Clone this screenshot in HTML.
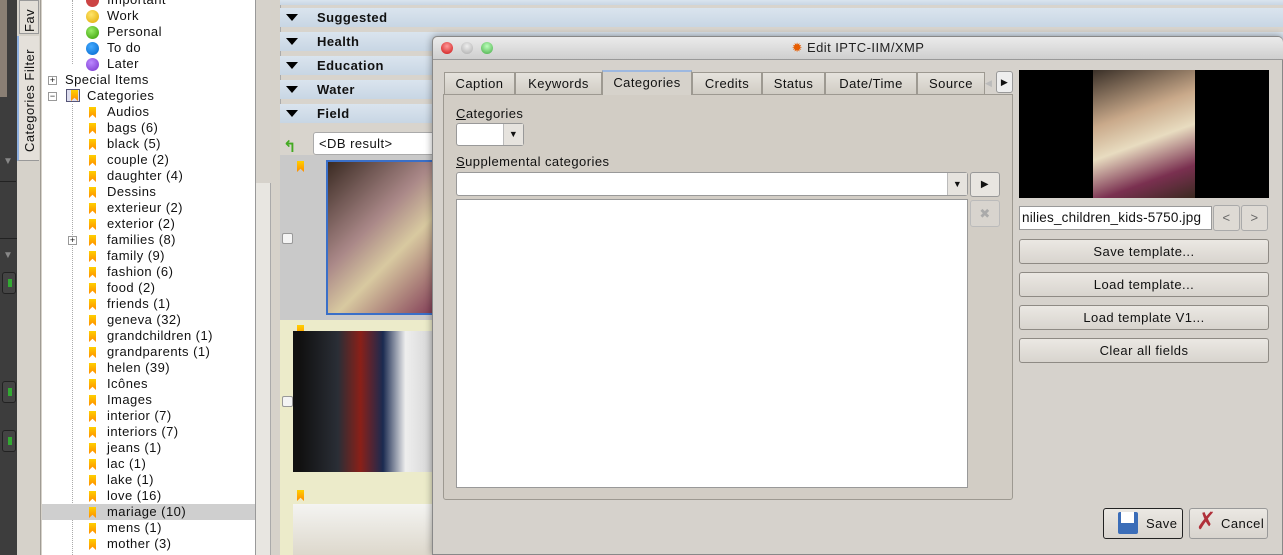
<!DOCTYPE html>
<html><head><meta charset="utf-8"><style>
*{box-sizing:border-box;margin:0;padding:0}
body{width:1283px;height:555px;overflow:hidden;position:relative;font-family:"Liberation Sans","DejaVu Sans",sans-serif;font-size:13px;letter-spacing:.45px;color:#111;background:#d6d2ca}
.a{position:absolute}
.row{position:absolute;left:0;height:16px;line-height:16px;white-space:nowrap}
.bm{position:absolute;width:7px;height:11px;background:linear-gradient(#ffd000,#ff8c00);top:3px;clip-path:polygon(0 0,100% 0,100% 100%,50% 70%,0 100%)}
.dot{position:absolute;width:13px;height:13px;border-radius:50%;top:2px}
.hdr{position:absolute;left:280px;width:1003px;height:19px;background:linear-gradient(#dae4ee,#c8d6e4);font-weight:bold;font-size:13px;line-height:19px;padding-left:37px}
.tri{position:absolute;left:6px;top:6px;width:0;height:0;border-left:6px solid transparent;border-right:6px solid transparent;border-top:7px solid #000}
.tab{position:absolute;top:72px;height:22px;border:1px solid #9d9991;border-bottom:none;background:linear-gradient(#e6e3dd,#d0ccc4);font-size:13px;line-height:21px;text-align:center}
.btn{position:absolute;left:1019px;width:250px;height:25px;border:1px solid #8e8a84;border-radius:3px;background:linear-gradient(#ebe8e3,#d8d4ce);text-align:center;line-height:23px;font-size:13px}
</style></head><body>
<div class="a" style="left:0;top:0;width:17px;height:555px;background:#3d3d3d"></div>
<div class="a" style="left:0;top:0;width:7px;height:97px;background:#8a7f74"></div>
<div class="a" style="left:0;top:160px;width:16px;height:22px;border-bottom:1px solid #222"></div>
<div class="a" style="left:3px;top:156px;color:#888;font-size:10px">▼</div>
<div class="a" style="left:3px;top:250px;color:#888;font-size:10px">▼</div>
<div class="a" style="left:0;top:238px;width:17px;height:1px;background:#222"></div>
<div class="a" style="left:2px;top:272px;width:14px;height:22px;border:1px solid #222;border-radius:3px;background:#444"></div>
<div class="a" style="left:8px;top:279px;width:4px;height:8px;background:#3a3"></div>
<div class="a" style="left:2px;top:381px;width:14px;height:22px;border:1px solid #222;border-radius:3px;background:#444"></div>
<div class="a" style="left:8px;top:388px;width:4px;height:8px;background:#3a3"></div>
<div class="a" style="left:2px;top:430px;width:14px;height:22px;border:1px solid #222;border-radius:3px;background:#444"></div>
<div class="a" style="left:8px;top:437px;width:4px;height:8px;background:#3a3"></div>
<div class="a" style="left:17px;top:0;width:24px;height:555px;background:#d6d2ca;border-right:1px solid #a09c94"></div>
<div class="a" style="left:19px;top:0;width:20px;height:34px;background:#e2ded7;border:1px solid #999"></div>
<div class="a" style="left:22px;top:32px;transform:rotate(-90deg);transform-origin:left top;font-size:13px;white-space:nowrap">Fav</div>
<div class="a" style="left:17px;top:36px;width:22px;height:125px;background:#e4e0da;border-left:2px solid #8fb0e0;border-bottom:1px solid #999"></div>
<div class="a" style="left:22px;top:152px;transform:rotate(-90deg);transform-origin:left top;font-size:13px;white-space:nowrap">Categories Filter</div>
<div class="a" style="left:42px;top:0;width:214px;height:555px;background:#fff;border-right:1px solid #999">
<div class="a" style="left:30px;top:0;height:64px;border-left:1px dotted #aaa"></div>
<div class="a" style="left:30px;top:104px;height:451px;border-left:1px dotted #aaa"></div>
<div class="row" style="top:-8px;left:44px;width:170px"><span class="dot" style="left:0;background:#c44"></span><span style="margin-left:21px">Important</span></div>
<div class="row" style="top:8px;left:44px"><span class="dot" style="left:0;background:radial-gradient(circle at 40% 35%,#ffe56a,#e0a800)"></span><span style="margin-left:21px">Work</span></div>
<div class="row" style="top:24px;left:44px"><span class="dot" style="left:0;background:radial-gradient(circle at 40% 35%,#9e6,#390)"></span><span style="margin-left:21px">Personal</span></div>
<div class="row" style="top:40px;left:44px"><span class="dot" style="left:0;background:radial-gradient(circle at 40% 35%,#4af,#06c)"></span><span style="margin-left:21px">To do</span></div>
<div class="row" style="top:56px;left:44px"><span class="dot" style="left:0;background:radial-gradient(circle at 40% 35%,#b8f,#73c)"></span><span style="margin-left:21px">Later</span></div>
<div class="a" style="left:6px;top:76px;width:9px;height:9px;border:1px solid #999;font-size:9px;line-height:7px;text-align:center;background:#fff;letter-spacing:0">+</div>
<div class="row" style="top:72px;left:23px">Special Items</div>
<div class="a" style="left:6px;top:92px;width:9px;height:9px;border:1px solid #999;font-size:9px;line-height:6px;text-align:center;background:#fff;letter-spacing:0">−</div>
<div class="a" style="left:24px;top:89px;width:14px;height:13px;border:1px solid #557;background:#dde"></div><span class="bm" style="left:29px;top:90px"></span>
<div class="row" style="top:88px;left:45px">Categories</div>
<div class="a" style="left:26px;top:236px;width:9px;height:9px;border:1px solid #999;font-size:9px;line-height:7px;text-align:center;background:#fff;letter-spacing:0">+</div>
<div class="a" style="left:0;top:504px;width:213px;height:16px;background:#cfcfcf"></div>
<div id="cats"></div>
</div>
<div class="a" style="left:256px;top:0;width:15px;height:555px;background:#e8e6e1;border-right:1px solid #aaa"></div>
<div class="a" style="left:256px;top:0;width:15px;height:183px;background:#d6d2cb"></div>
<div class="a" style="left:272px;top:0;width:8px;height:555px;background:#d6d2ca"></div>
<div class="a" style="left:280px;top:0;width:1003px;height:123px;background:#d8d4cd;border-left:1px solid #aaa"></div>
<div class="hdr" style="top:0;height:5px;padding:0"></div>
<div class="hdr" style="top:8px"><span class="tri"></span>Suggested</div>
<div class="hdr" style="top:32px"><span class="tri"></span>Health</div>
<div class="hdr" style="top:56px"><span class="tri"></span>Education</div>
<div class="hdr" style="top:80px"><span class="tri"></span>Water</div>
<div class="hdr" style="top:104px"><span class="tri"></span>Field</div>
<div class="a" style="left:280px;top:123px;width:1003px;height:32px;background:#d8d4cd"></div>
<div class="a" style="left:283px;top:137px;color:#4a2;font-size:16px;font-weight:bold">↰</div>
<div class="a" style="left:313px;top:132px;width:200px;height:23px;background:#fff;border:1px solid #aaa;border-radius:3px;padding-left:5px;line-height:22px">&lt;DB result&gt;</div>
<div class="a" style="left:280px;top:155px;width:1003px;height:165px;background:#c9c9c9"></div>
<div class="a" style="left:280px;top:320px;width:1003px;height:235px;background:#ecebca"></div>
<span class="bm" style="left:297px;top:161px"></span>
<span class="bm" style="left:297px;top:325px"></span>
<span class="bm" style="left:297px;top:490px"></span>
<div class="a" style="left:282px;top:233px;width:11px;height:11px;border:1px solid #999;border-radius:2px;background:#f4f4f4"></div>
<div class="a" style="left:282px;top:396px;width:11px;height:11px;border:1px solid #999;border-radius:2px;background:#f4f4f4"></div>
<div class="a" style="left:326px;top:160px;width:120px;height:155px;border:2px solid #3a6fc8;background:linear-gradient(135deg,#3a2a22,#a88 40%,#d8c9a0 60%,#7a3050)"></div>
<div class="a" style="left:293px;top:331px;width:150px;height:141px;background:linear-gradient(90deg,#111 5%,#2a2e36 30%,#8a2018 45%,#1a2a50 60%,#eee 75%,#ccc)"></div>
<div class="a" style="left:293px;top:504px;width:150px;height:51px;background:linear-gradient(#f4f4f2,#ddd8cc)"></div>
<div class="a" style="left:432px;top:36px;width:851px;height:519px;background:#d6d2cc;border:1px solid #888;border-radius:5px 5px 0 0;box-shadow:0 0 8px rgba(0,0,0,.4)"></div>
<div class="a" style="left:433px;top:37px;width:850px;height:23px;background:linear-gradient(#ebebeb,#cfcfcf);border-bottom:1px solid #999;border-radius:5px 5px 0 0;text-align:center;line-height:22px;font-size:13px;color:#222"><span style="color:#e65c00">✹</span> Edit IPTC-IIM/XMP</div>
<div class="a" style="left:441px;top:42px;width:12px;height:12px;border-radius:50%;background:radial-gradient(circle at 50% 35%,#f99,#c11)"></div>
<div class="a" style="left:461px;top:42px;width:12px;height:12px;border-radius:50%;background:radial-gradient(circle at 50% 35%,#eee,#aaa)"></div>
<div class="a" style="left:481px;top:42px;width:12px;height:12px;border-radius:50%;background:radial-gradient(circle at 50% 35%,#bfb,#4a4)"></div>
<div class="a" style="left:443px;top:94px;width:570px;height:406px;border:1px solid #9d9991;border-radius:0 0 3px 3px;background:#d2cdc5"></div>
<div class="tab" style="left:444px;width:71px">Caption</div>
<div class="tab" style="left:515px;width:87px">Keywords</div>
<div class="tab" style="left:602px;width:90px;top:70px;height:25px;background:#d6d2cb;border-top:2px solid #9db8e0">Categories</div>
<div class="tab" style="left:692px;width:70px">Credits</div>
<div class="tab" style="left:762px;width:63px">Status</div>
<div class="tab" style="left:825px;width:92px">Date/Time</div>
<div class="tab" style="left:917px;width:68px">Source</div>
<div class="a" style="left:985px;top:73px;width:11px;height:20px;color:#bbb;font-size:9px;line-height:20px">◀</div>
<div class="a" style="left:996px;top:71px;width:17px;height:22px;border:1px solid #999;border-radius:3px;background:#eee;font-size:9px;line-height:20px;text-align:center">▶</div>
<div class="a" style="left:456px;top:106px"><u>C</u>ategories</div>
<div class="a" style="left:456px;top:123px;width:68px;height:23px;border:1px solid #999;border-radius:3px;background:#fff"></div>
<div class="a" style="left:503px;top:124px;width:20px;height:21px;border-left:1px solid #bbb;background:#e6e3de;font-size:9px;text-align:center;line-height:21px">▼</div>
<div class="a" style="left:456px;top:154px"><u>S</u>upplemental categories</div>
<div class="a" style="left:456px;top:172px;width:512px;height:24px;border:1px solid #999;border-radius:3px;background:#fff"></div>
<div class="a" style="left:947px;top:173px;width:20px;height:22px;border-left:1px solid #bbb;background:#e6e3de;font-size:9px;text-align:center;line-height:22px">▼</div>
<div class="a" style="left:970px;top:172px;width:30px;height:25px;border:1px solid #999;border-radius:3px;background:#e8e5e0;font-size:10px;text-align:center;line-height:24px">▶</div>
<div class="a" style="left:456px;top:199px;width:512px;height:289px;border:1px solid #999;background:#fff"></div>
<div class="a" style="left:970px;top:200px;width:30px;height:27px;border:1px solid #bbb;border-radius:3px;background:#d8d4ce;color:#aaa;text-align:center;line-height:26px">✖</div>
<div class="a" style="left:1019px;top:70px;width:250px;height:128px;background:#000"></div>
<div class="a" style="left:1093px;top:70px;width:102px;height:128px;background:linear-gradient(160deg,#3a3028,#c9a98a 35%,#e8dcc0 55%,#7a3050 80%,#3a2a20)"></div>
<div class="a" style="left:1019px;top:206px;width:193px;height:24px;border:1px solid #999;background:#fff;line-height:22px;padding-left:2px;font-size:13.5px;overflow:hidden;white-space:nowrap;letter-spacing:.2px">nilies_children_kids-5750.jpg</div>
<div class="a" style="left:1213px;top:205px;width:27px;height:26px;border:1px solid #aaa;border-radius:3px;background:#dedad4;text-align:center;line-height:24px;color:#666">&lt;</div>
<div class="a" style="left:1241px;top:205px;width:27px;height:26px;border:1px solid #aaa;border-radius:3px;background:#dedad4;text-align:center;line-height:24px;color:#666">&gt;</div>
<div class="btn" style="top:239px">Save template...</div>
<div class="btn" style="top:272px">Load template...</div>
<div class="btn" style="top:305px">Load template V1...</div>
<div class="btn" style="top:338px">Clear all fields</div>
<div class="a" style="left:1103px;top:508px;width:80px;height:31px;border:1px solid #222;border-radius:3px;background:linear-gradient(#ebe8e3,#d8d4ce);line-height:29px;padding-left:42px">Save</div>
<div class="a" style="left:1118px;top:512px;width:20px;height:22px;background:#3b6db8;border-radius:2px"></div>
<div class="a" style="left:1121px;top:512px;width:13px;height:11px;background:#fff"></div>
<div class="a" style="left:1189px;top:508px;width:79px;height:31px;border:1px solid #999;border-radius:3px;background:linear-gradient(#ebe8e3,#d8d4ce);line-height:29px;padding-left:31px">Cancel</div>
<div class="a" style="left:1196px;top:507px;color:#b0303a;font-size:24px;font-weight:bold">✗</div>
<script>
var c=["Audios","bags (6)","black (5)","couple (2)","daughter (4)","Dessins","exterieur (2)","exterior (2)","families (8)","family (9)","fashion (6)","food (2)","friends (1)","geneva (32)","grandchildren (1)","grandparents (1)","helen (39)","Icônes","Images","interior (7)","interiors (7)","jeans (1)","lac (1)","lake (1)","love (16)","mariage (10)","mens (1)","mother (3)"];
var h="";c.forEach(function(t,i){var y=104+i*16;h+='<span class="bm" style="left:47px;top:'+(y+3)+'px"></span><div class="row" style="top:'+y+'px;left:65px">'+t+'</div>';});
document.getElementById("cats").innerHTML=h;
</script>
</body></html>
